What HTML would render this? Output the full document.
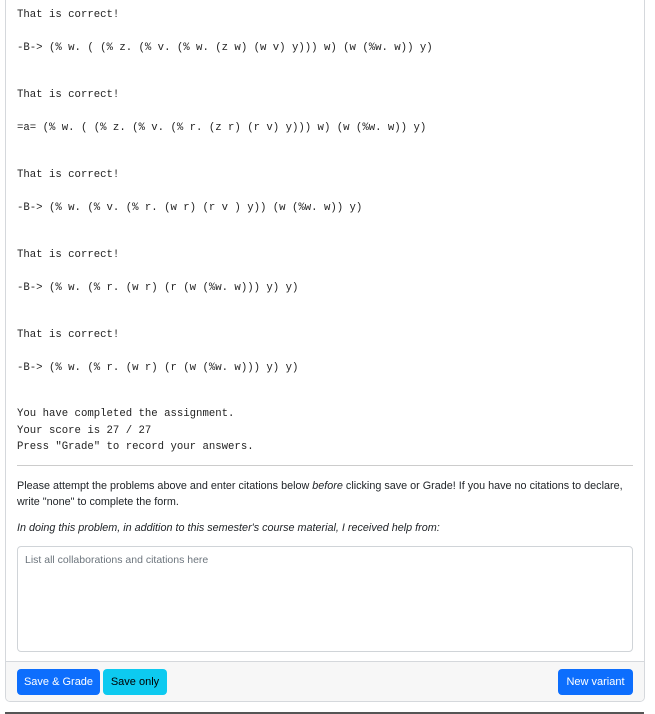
<!DOCTYPE html>
<html><head><style>
body{margin:0;background:#fff;width:655px;height:714px;position:relative;overflow:hidden;font-family:"Liberation Sans",sans-serif;}
.card{position:absolute;left:5px;top:-10px;width:640px;height:712px;border:1px solid #d5d8dc;border-radius:5px;box-sizing:border-box;overflow:hidden;}
.m{position:absolute;left:17px;font-family:"Liberation Mono",monospace;font-size:10.67px;color:#222;white-space:pre;line-height:14px;}
hr{position:absolute;left:17px;width:616px;margin:0;border:0;border-top:1px solid #ccc;}
.p{position:absolute;left:17px;font-size:10.8px;color:#212529;line-height:15.5px;width:620px;}
.ta{position:absolute;left:17px;top:546px;width:616px;height:106px;border:1px solid #d0d4d8;border-radius:4px;box-sizing:border-box;font-size:10.5px;color:#6c757d;padding:7px 7px;}
.foot{position:absolute;left:0;bottom:0;width:100%;height:39px;background:#f7f7f7;border-top:1px solid #d5d8dc;}
.b{position:absolute;top:669px;height:26px;border-radius:4px;font-size:11px;line-height:26px;text-align:center;color:#fff;background:#0d6efd;}
</style></head><body>
<div class="card"><div class="foot"></div></div>
<div class="m" style="top:8px">That is correct!</div>
<div class="m" style="top:41px">-B-> (% w. ( (% z. (% v. (% w. (z w) (w v) y))) w) (w (%w. w)) y)</div>
<div class="m" style="top:88px">That is correct!</div>
<div class="m" style="top:121px">=a= (% w. ( (% z. (% v. (% r. (z r) (r v) y))) w) (w (%w. w)) y)</div>
<div class="m" style="top:168px">That is correct!</div>
<div class="m" style="top:201px">-B-> (% w. (% v. (% r. (w r) (r v ) y)) (w (%w. w)) y)</div>
<div class="m" style="top:248px">That is correct!</div>
<div class="m" style="top:281px">-B-> (% w. (% r. (w r) (r (w (%w. w))) y) y)</div>
<div class="m" style="top:328px">That is correct!</div>
<div class="m" style="top:361px">-B-> (% w. (% r. (w r) (r (w (%w. w))) y) y)</div>
<div class="m" style="top:406px;line-height:16.5px">You have completed the assignment.
Your score is 27 / 27
Press "Grade" to record your answers.</div>
<hr style="top:465px">
<div class="p" style="top:479px">Please attempt the problems above and enter citations below <i>before</i> clicking save or Grade! If you have no citations to declare, write "none" to complete the form.</div>
<div class="p" style="top:521px"><i>In doing this problem, in addition to this semester's course material, I received help from:</i></div>
<div class="ta">List all collaborations and citations here</div>
<div class="b" style="left:17px;width:83px">Save &amp; Grade</div>
<div class="b" style="left:103px;width:64px;background:#0dcaf0;color:#000">Save only</div>
<div class="b" style="left:558px;width:75px">New variant</div>
<div style="position:absolute;left:5px;top:712px;width:639px;height:2px;background:#555"></div>
</body></html>
